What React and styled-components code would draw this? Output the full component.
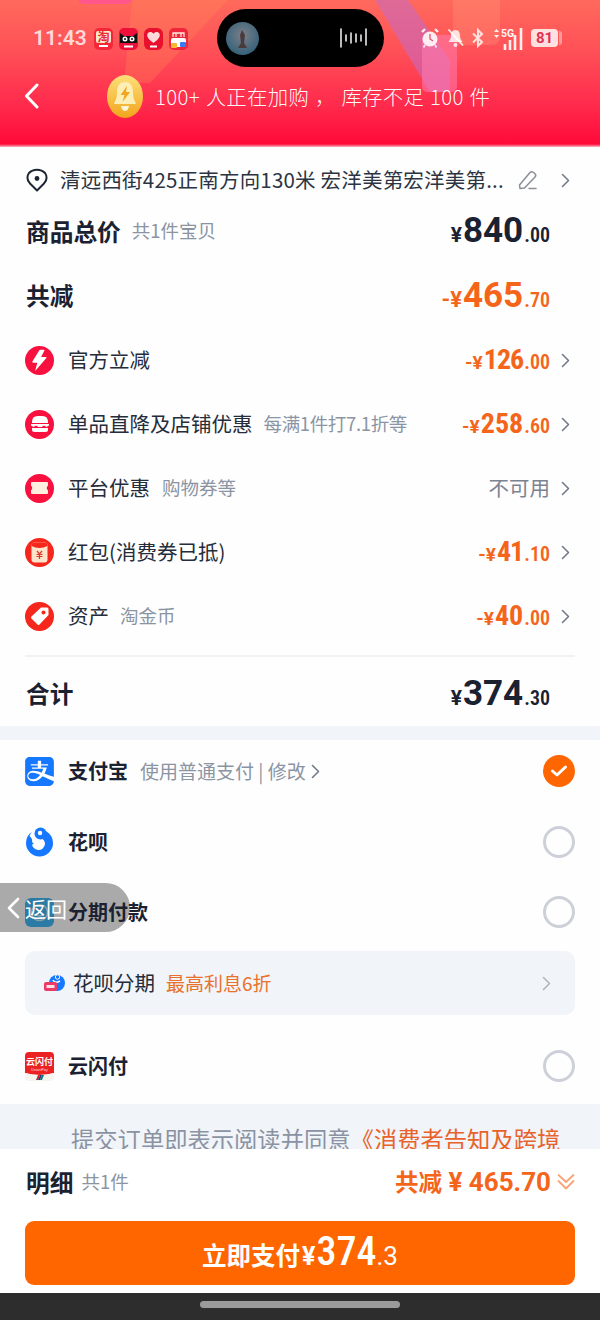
import React from "react";
import styled, { createGlobalStyle } from "styled-components";
import { SiAlipay } from "react-icons/si";

const GlobalStyle = createGlobalStyle`
  html, body { margin: 0; padding: 0; background: #fff; }
  * { box-sizing: border-box; }
`;

const CJK = `"Noto Sans CJK SC", "Noto Sans", sans-serif`;
const NUM = `Roboto, "Liberation Sans", sans-serif`;
const ORANGE = "#f4651a";
const INK = "#1a2130";

const Screen = styled.div`
  position: relative;
  width: 600px;
  height: 1320px;
  overflow: hidden;
  display: flex;
  flex-direction: column;
  background: #fefefe;
  font-family: ${CJK};
  color: ${INK};
`;

/* ---------- top banner ---------- */
const Banner = styled.header`
  position: relative;
  flex: 0 0 147px;
  overflow: hidden;
  background: linear-gradient(180deg, #ff6a5c 0%, #ff5057 35%, #ff2c4d 70%, #ff0a3a 98%, #ffb9c4 100%);
`;
const Decor = styled.svg`
  position: absolute;
  inset: 0;
  width: 600px;
  height: 147px;
`;
const StatusBar = styled.div`
  position: relative;
  display: flex;
  align-items: center;
  height: 58px;
  margin-top: 9px;
  padding-left: 33px;
`;
const Clock = styled.span`
  width: 61px;
  font: 600 21px ${NUM};
  color: rgba(255, 255, 255, 0.78);
`;
const Apps = styled.div`
  display: flex;
  gap: 6px;
  width: 96px;
  margin-top: 1px;
`;
const Island = styled.div`
  display: flex;
  align-items: center;
  justify-content: space-between;
  width: 167px;
  height: 58px;
  margin-left: 27px;
  padding: 0 16px 0 9px;
  border-radius: 29px;
  background: #000;
`;
const Tray = styled.div`
  display: flex;
  align-items: center;
  margin-left: 37px;
  gap: 8px;
`;
const Battery = styled.span`
  position: relative;
  display: block;
  width: 27px;
  height: 18px;
  border-radius: 4px;
  background: rgba(255, 255, 255, 0.82);
  color: #e2304f;
  font: 700 15px/18px ${NUM};
  text-align: center;
  &::after {
    content: "";
    position: absolute;
    right: -4px;
    top: 2px;
    width: 3px;
    height: 14px;
    border-radius: 0 3px 3px 0;
    background: rgba(255, 255, 255, 0.4);
  }
`;
const NavBar = styled.div`
  position: relative;
  display: flex;
  align-items: center;
  height: 58px;
  padding-left: 24px;
`;
const Notice = styled.span`
  margin-left: 12px;
  font-size: 20.4px;
  font-weight: 300;
  letter-spacing: 0.3px;
  word-spacing: 1px;
  color: rgba(255, 255, 255, 0.98);
  white-space: pre;
`;
const BellWrap = styled.span`
  display: flex;
  margin-left: 68px;
`;

/* ---------- order summary ---------- */
const Row = styled.div`
  display: flex;
  align-items: center;
  height: ${(p) => p.$h || 64}px;
  padding: 0 30px 0 25px;
  margin-top: ${(p) => p.$top || 0}px;
`;
const TotalRow = styled(Row)`
  padding: ${(p) => p.$pad || 0}px 50px 0 26px;
`;
const AddressText = styled.span`
  flex: 1;
  margin: 0 0 2px 11px;
  font-size: 20.5px;
  color: #2c3442;
  white-space: nowrap;
  letter-spacing: 0.2px;
`;
const Title = styled.span`
  font-size: 23.7px;
  font-weight: 700;
  color: ${INK};
`;
const Hint = styled.span`
  margin: 0 0 2px ${(p) => p.$gap || 11}px;
  font-size: ${(p) => p.$size || 18.5}px;
  letter-spacing: ${(p) => p.$track || 0}px;
  color: #8b94a3;
  white-space: nowrap;
`;
const Label = styled.span`
  margin: 0 0 2px 14px;
  font-size: 20.5px;
  color: #252c3a;
  white-space: nowrap;
`;
const Price = styled.span`
  margin: 0 0 ${(p) => p.$lift || 0}px auto;
  font-family: ${NUM};
  color: ${(p) => (p.$warm ? ORANGE : INK)};
  white-space: nowrap;
  line-height: 1;
  display: inline-flex;
  align-items: baseline;
`;
const Sign = styled.span`
  font-size: ${(p) => p.$size}px;
  font-weight: 700;
  margin-right: 1px;
`;
const Whole = styled.span`
  font-size: ${(p) => p.$size}px;
  font-weight: 700;
  font-stretch: ${(p) => p.$stretch}%;
  letter-spacing: ${(p) => p.$track || 0}px;
`;
const Cents = styled.span`
  font-size: ${(p) => p.$size}px;
  font-weight: 600;
  font-stretch: 84%;
  margin-left: 1px;
`;
const Muted = styled.span`
  margin: 0 0 2px auto;
  font-size: 20.5px;
  color: #7b8392;
`;
const Arrow = styled.svg`
  flex: none;
  width: 9px;
  height: 15px;
  margin-left: ${(p) => p.$gap ?? 11}px;
  fill: none;
  stroke: ${(p) => p.$tone || "#737b8a"};
  stroke-width: 1.6;
  stroke-linecap: round;
  stroke-linejoin: round;
`;
const Round = styled.span`
  flex: none;
  width: 29px;
  height: 29px;
  border-radius: 50%;
  background: ${(p) => p.$bg};
  display: flex;
  align-items: center;
  justify-content: center;
`;
const Divider = styled.div`
  height: 2px;
  margin: 7px 25px 0;
  background: #f1f2f4;
`;
const Gap = styled.div`
  flex: 0 0 14px;
  background: #f1f4f8;
`;

/* ---------- payment methods ---------- */
const PayRow = styled(Row)`
  padding: ${(p) => p.$pad || 0}px 25px 0 25px;
`;
const PayName = styled.span`
  position: relative;
  z-index: 2;
  margin: 0 0 2px 14px;
  font-size: 20px;
  font-weight: 700;
  color: ${INK};
  white-space: nowrap;
`;
const Radio = styled.span`
  flex: none;
  margin-left: auto;
  width: 32px;
  height: 32px;
  border-radius: 50%;
  border: 3px solid #cdd0d8;
`;
const Checked = styled.span`
  flex: none;
  margin-left: auto;
  width: 32px;
  height: 32px;
  border-radius: 50%;
  background: #ff6600;
  display: flex;
  align-items: center;
  justify-content: center;
`;
const InstalmentMark = styled.span`
  flex: none;
  width: 29px;
  height: 29px;
  border-radius: 6px;
  background: #00a0f5;
  display: flex;
  align-items: center;
  justify-content: center;
`;
const PlanCard = styled.div`
  display: flex;
  align-items: center;
  height: 64px;
  margin: 9px 25px 0;
  padding: 0 24px 0 19px;
  border-radius: 10px;
  background: #f1f4f8;
`;
const PlanName = styled.span`
  margin: 0 0 2px 8px;
  font-size: 20.5px;
  color: #252c3a;
`;
const PlanOffer = styled.span`
  margin: 0 0 2px 11px;
  font-size: 19px;
  color: #e8722c;
`;
const Terms = styled.div`
  flex: 0 0 45px;
  overflow: hidden;
  padding: 20px 0 0 71px;
  background: #f1f4f8;
  font-size: 23.3px;
  line-height: 30px;
  color: #8a93a3;
  white-space: nowrap;
`;
const TermsLink = styled.span`
  color: #e8622a;
`;

/* ---------- checkout footer ---------- */
const Footer = styled.footer`
  flex: 0 0 144px;
  background: #fff;
  padding: 0 25px;
  display: flex;
  flex-direction: column;
`;
const FooterTop = styled.div`
  display: flex;
  align-items: center;
  height: 66px;
  padding-left: 1px;
`;
const Saved = styled.span`
  margin: 0 0 2px auto;
  font-size: 23.5px;
  font-weight: 700;
  color: ${ORANGE};
  white-space: pre;
`;
const SavedNum = styled.span`
  font-family: ${NUM};
  font-size: 26px;
  font-weight: 700;
`;
const PayButton = styled.button`
  display: flex;
  align-items: baseline;
  justify-content: center;
  height: 64px;
  margin-top: 6px;
  padding: 11px 0 0;
  border: 0;
  border-radius: 9px;
  background: #ff6600;
  color: #fff;
  font-family: ${CJK};
  font-size: 24.5px;
  font-weight: 700;
  line-height: 40px;
`;
const ButtonWhole = styled.span`
  font-family: ${NUM};
  font-size: 40px;
  font-weight: 500;
  font-stretch: 78%;
  margin-left: 1px;
`;
const ButtonCents = styled.span`
  font-family: ${NUM};
  font-size: 26px;
  font-weight: 400;
`;
const ButtonYen = styled.span`
  font-family: ${NUM};
  font-size: 25px;
  font-weight: 700;
  margin-left: 2px;
`;
const HomeBar = styled.div`
  flex: 0 0 27px;
  display: flex;
  justify-content: center;
  padding-top: 8px;
  background: #2d2d2d;
`;
const HomePill = styled.span`
  width: 200px;
  height: 7px;
  border-radius: 4px;
  background: #9a9a9a;
`;

/* Swipe-back hint that floats over the list */
const BackHint = styled.div`
  position: absolute;
  left: 0;
  top: 883px;
  width: 130px;
  height: 49px;
  display: flex;
  align-items: center;
  padding-left: 7px;
  border-radius: 0 25px 25px 0;
  background: rgba(85, 85, 85, 0.5);
  color: #fff;
  font-size: 21px;
  gap: 5px;
`;

const Chevron = ({ tone, gap }) => (
  <Arrow viewBox="0 0 9 15" $tone={tone} $gap={gap}>
    <path d="M1.5 1.5 L7.5 7.5 L1.5 13.5" />
  </Arrow>
);

const Amount = ({ warm, sign, whole, cents, lift = 1, track = 0, s = 19, w = 28, c = 20, stretch = 85 }) => (
  <Price $warm={warm} $lift={lift}>
    <Sign $size={s}>{sign}</Sign>
    <Whole $size={w} $track={track} $stretch={stretch}>{whole}</Whole>
    <Cents $size={c}>{cents}</Cents>
  </Price>
);

const TaoIcon = () => (
  <svg width="19" height="22" viewBox="0 0 19 22">
    <rect width="19" height="22" rx="5" fill="#f2273a" />
    <rect x="2" y="3" width="15" height="12" rx="2" fill="#ffe9c9" />
    <text x="9.5" y="13.5" fontSize="12" fontWeight="700" textAnchor="middle" fill="#e8262f" fontFamily={CJK}>淘</text>
    <rect x="5" y="17" width="9" height="2" fill="#fff" />
  </svg>
);
const CatIcon = () => (
  <svg width="19" height="22" viewBox="0 0 19 22">
    <rect width="19" height="22" rx="5" fill="#ee0f3a" />
    <path d="M1 5 L5 8 H14 L18 5 V15 H1 Z" fill="#111" />
    <circle cx="6" cy="11" r="2.5" fill="#fff" />
    <circle cx="13" cy="11" r="2.5" fill="#fff" />
    <circle cx="6" cy="11" r="1" fill="#111" />
    <circle cx="13" cy="11" r="1" fill="#111" />
    <rect x="5" y="17.5" width="9" height="2" fill="#fff" />
  </svg>
);
const HeartIcon = () => (
  <svg width="19" height="22" viewBox="0 0 19 22">
    <rect width="19" height="22" rx="6" fill="#e8102c" />
    <path d="M9.5 15 C4 11 2.5 8.5 3.5 5.8 C4.6 3.3 8 3.3 9.5 5.8 C11 3.3 14.4 3.3 15.5 5.8 C16.5 8.5 15 11 9.5 15 Z" fill="#ffd9d9" />
    <rect x="6" y="17.5" width="7" height="2" fill="#fff" />
  </svg>
);
const StoreIcon = () => (
  <svg width="19" height="22" viewBox="0 0 19 22">
    <rect width="19" height="22" rx="5" fill="#f0263c" />
    <path d="M4 9 V5 H15 V9 M7 5 V9 M12 5 V9" stroke="#ffe9d9" strokeWidth="1.3" fill="none" />
    <rect x="2" y="10" width="15" height="9" rx="2" fill="#fff" />
    <rect x="2" y="15" width="6" height="5" rx="1" fill="#f7b733" />
    <rect x="11" y="14" width="6" height="5" rx="1" fill="#3a7df0" />
  </svg>
);

const Ring = { fill: "none", stroke: "rgba(255,255,255,.8)" };

export default function App() {
  return (
    <Screen>
      <GlobalStyle />
      <Banner>
        <Decor viewBox="0 0 600 147">
          <rect x="78" y="-20" width="54" height="24" rx="6" fill="#ff4fa0" opacity=".7" />
          <path d="M132 0 H228 L150 83 H134 Q125 83 125 74 Z" fill="#ff8a55" opacity=".3" />
          <path d="M375 0 H408 L450 60 V92 H430 Z" fill="#c86bc0" opacity=".6" />
          <rect x="422" y="35" width="35" height="57" rx="5" fill="#ff7cb0" opacity=".55" />
          <path d="M453 0 H500 V36 Q500 45 491 45 H462 Q453 45 453 36 Z" fill="#ff9a7c" opacity=".3" />
        </Decor>
        <StatusBar>
          <Clock>11:43</Clock>
          <Apps>
            <TaoIcon />
            <CatIcon />
            <HeartIcon />
            <StoreIcon />
          </Apps>
          <Island>
            <svg width="33" height="33" viewBox="0 0 33 33">
              <defs>
                <radialGradient id="cover" cx="50%" cy="40%" r="65%">
                  <stop offset="0%" stopColor="#7d7f88" />
                  <stop offset="100%" stopColor="#2e5f78" />
                </radialGradient>
              </defs>
              <circle cx="16.5" cy="16.5" r="16.5" fill="url(#cover)" />
              <path d="M16 8 L19 13 L18 21 L21 26 H12 L15 21 L14 13 Z" fill="#4a3a3c" />
            </svg>
            <svg width="28" height="20" viewBox="0 0 28 20" stroke="#e9e9e9" strokeWidth="1.6" strokeLinecap="round">
              <path d="M1 1 V19 M6 7 V13 M11 5 V15 M16 6 V14 M21 7 V13 M26 1 V17" />
            </svg>
          </Island>
          <Tray>
            <svg width="18" height="20" viewBox="0 0 18 20">
              <circle cx="9" cy="11" r="7.5" fill="rgba(255,255,255,.88)" />
              <path d="M9 6 V11 L12 13" stroke="#e8506a" strokeWidth="1.3" fill="none" />
              <path d="M1 4 L4 1 M17 4 L14 1" stroke="rgba(255,255,255,.88)" strokeWidth="2.4" />
              <path d="M4 17 L2.5 19.5 M14 17 L15.5 19.5" stroke="rgba(255,255,255,.88)" strokeWidth="1.6" />
            </svg>
            <svg width="17" height="20" viewBox="0 0 17 20">
              <path d="M8.5 2 C5 2 4 5 4 8 C4 11 2.5 12.5 1.5 14 H15.5 C14.5 12.5 13 11 13 8 C13 5 12 2 8.5 2 Z" fill="rgba(255,255,255,.8)" />
              <circle cx="8.5" cy="17" r="2" fill="rgba(255,255,255,.8)" />
              <path d="M1.5 1.5 L16 17.5" stroke="rgba(255,255,255,.9)" strokeWidth="1.8" />
            </svg>
            <svg width="12" height="20" viewBox="0 0 12 20" {...Ring} strokeWidth="2">
              <path d="M1 5.5 L10 14 L6 18 V2 L10 6 L1 14.5" />
            </svg>
            <svg width="29" height="24" viewBox="0 0 29 24" style={{ marginLeft: 2, marginTop: 2 }}>
              <path d="M0 5 L2.5 2 L5 5 Z M0 8 L2.5 11 L5 8 Z" fill="rgba(255,255,255,.9)" />
              <text x="7" y="10" fontSize="10.5" fontWeight="700" fontFamily={NUM} fill="rgba(255,255,255,.95)">5G</text>
              <path d="M11 23 V17 M16 23 V13 M21 23 V8 M27 23 V1" stroke="rgba(255,255,255,.9)" strokeWidth="2.6" />
            </svg>
            <Battery>81</Battery>
          </Tray>
        </StatusBar>
        <NavBar>
          <svg width="15" height="26" viewBox="0 0 15 26" fill="none" stroke="#fff" strokeWidth="3" strokeLinecap="round" strokeLinejoin="round">
            <path d="M13 2 L2.5 13 L13 24" />
          </svg>
          <BellWrap>
            <svg width="36" height="43" viewBox="0 0 36 43">
              <defs>
                <linearGradient id="bellFill" x1="0" y1="0" x2="0" y2="1">
                  <stop offset="0%" stopColor="#fde07a" />
                  <stop offset="100%" stopColor="#f2a51c" />
                </linearGradient>
              </defs>
              <ellipse cx="18" cy="21.5" rx="18" ry="21.5" fill="url(#bellFill)" />
              <path d="M18 7 C11 7 10 13 10 18 C10 24 8 26 7 29 H29 C28 26 26 24 26 18 C26 13 25 7 18 7 Z" fill="#fdeeb5" />
              <path d="M20 11 L13.5 20 H17.5 L15.5 27 L23 17 H19 Z" fill="#f2a51c" />
              <path d="M14 31 H22 Q21 36 18 36 Q15 36 14 31 Z" fill="#fff5d8" />
            </svg>
          </BellWrap>
          <Notice>100+ 人正在加购 ， 库存不足 100 件</Notice>
        </NavBar>
      </Banner>

      <Row $h={66}>
        <svg width="24" height="24" viewBox="0 0 24 24" fill="none" stroke="#1e2532" strokeWidth="2" strokeLinejoin="round">
          <path d="M12 22.5 L5 15.5 C1.5 12 2 7.5 4 5 C8 0.5 16 0.5 20 5 C22 7.5 22.5 12 19 15.5 Z" />
          <circle cx="12" cy="10.5" r="2.4" fill="#1e2532" stroke="none" />
        </svg>
        <AddressText>清远西街425正南方向130米 宏洋美第宏洋美第...</AddressText>
        <svg width="20" height="20" viewBox="0 0 20 20" fill="none" stroke="#8b8f98" strokeWidth="1.5" strokeLinejoin="round" strokeLinecap="round">
          <path d="M1.5 15 L12 2.5 Q13.5 1 15.5 2.5 L17 3.8 Q18.5 5.5 17 7 L6.5 18 L2 18.5 Z" />
          <path d="M11 18.5 H18" />
        </svg>
        <Chevron gap={23} />
      </Row>
      <TotalRow $h={35}>
        <Title>商品总价</Title>
        <Hint>共1件宝贝</Hint>
        <Amount sign="¥" whole="840" cents=".00" s={21} w={35} lift={0} stretch={94} />
      </TotalRow>
      <TotalRow $h={66} $top={14}>
        <Title>共减</Title>
        <Amount warm sign="-¥" whole="465" cents=".70" s={22} w={35} lift={0} stretch={94} />
      </TotalRow>

      <Row>
        <Round $bg="#f8103e">
          <svg width="21" height="23" viewBox="0 0 19 21">
            <path d="M9.5 1 L3 11.5 Q2.6 12.6 3.8 12.6 H7.5 L5.5 20 L15.8 8.3 Q16.3 7.4 15.2 7.4 H11 L14 1.4 Q14.2 0.6 13.2 0.6 H10.5 Q9.9 0.6 9.5 1 Z" fill="#fff" />
          </svg>
        </Round>
        <Label>官方立减</Label>
        <Amount warm sign="-¥" whole="126" cents=".00" track={-1} />
        <Chevron />
      </Row>
      <Row>
        <Round $bg="#f8103e">
          <svg width="20" height="18" viewBox="0 0 20 18" fill="#fff">
            <path d="M2 7 Q2 1 7.5 1 H12.5 Q18 1 18 7 V8 H2 Z" />
            <path d="M1 9 H19 V10.5 L16.5 12 L14 10.5 L11.5 12 H8.5 L6 10.5 L3.5 12 L1 10.5 Z" />
            <path d="M2 13 H18 V14.5 Q18 17 15.5 17 H4.5 Q2 17 2 14.5 Z" />
          </svg>
        </Round>
        <Label>单品直降及店铺优惠</Label>
        <Hint $track={-0.35}>每满1件打7.1折等</Hint>
        <Amount warm sign="-¥" whole="258" cents=".60" />
        <Chevron />
      </Row>
      <Row>
        <Round $bg="#f8103e">
          <svg width="19" height="14" viewBox="0 0 19 14">
            <path d="M2 1 H17 Q18 1 18 2 V4.5 Q15.5 7 18 9.5 V12 Q18 13 17 13 H2 Q1 13 1 12 V9.5 Q3.5 7 1 4.5 V2 Q1 1 2 1 Z" fill="#fdeee0" />
          </svg>
        </Round>
        <Label>平台优惠</Label>
        <Hint $gap={12}>购物券等</Hint>
        <Muted>不可用</Muted>
        <Chevron />
      </Row>
      <Row>
        <Round $bg="#f5261c">
          <svg width="17" height="21" viewBox="0 0 17 21">
            <rect x="0.5" y="0.5" width="16" height="20" rx="3" fill="#fde3c9" />
            <path d="M0.5 4 Q8.5 8 16.5 4 V3.5 Q16.5 0.5 13.5 0.5 H3.5 Q0.5 0.5 0.5 3.5 Z" fill="#f5261c" />
            <path d="M6 9 L8.5 12 L11 9 M5.5 12.5 H11.5 M5.5 14.5 H11.5 M8.5 12 V17" stroke="#d83a2a" strokeWidth="1.2" fill="none" />
          </svg>
        </Round>
        <Label>红包(消费券已抵)</Label>
        <Amount warm sign="-¥" whole="41" cents=".10" track={-1} />
        <Chevron />
      </Row>
      <Row>
        <Round $bg="#f5261c">
          <svg width="20" height="20" viewBox="0 0 20 20">
            <path d="M11 1.5 H17 Q18.5 1.5 18.5 3 V9 L9.5 18.5 Q8.5 19.5 7.5 18.5 L1.5 12.5 Q0.5 11.5 1.5 10.5 Z" fill="#fff" />
            <circle cx="13.5" cy="6.5" r="2" fill="#f5261c" />
          </svg>
        </Round>
        <Label>资产</Label>
        <Hint $gap={11}>淘金币</Hint>
        <Amount warm sign="-¥" whole="40" cents=".00" />
        <Chevron />
      </Row>
      <Divider />
      <TotalRow $h={69} $pad={3}>
        <Title>合计</Title>
        <Amount sign="¥" whole="374" cents=".30" s={21} w={35} lift={0} stretch={88} />
      </TotalRow>
      <Gap />

      <PayRow $h={62}>
        <SiAlipay size={29} color="#1677ff" style={{ flex: "none" }} />
        <PayName>支付宝</PayName>
        <Hint $gap={12} $size={19}>使用普通支付 | 修改</Hint>
        <Chevron gap={5} />
        <Checked>
          <svg width="18" height="14" viewBox="0 0 18 14" fill="none" stroke="#fff" strokeWidth="3" strokeLinecap="round" strokeLinejoin="round">
            <path d="M2.5 7 L7 11 L15.5 3" />
          </svg>
        </Checked>
      </PayRow>
      <PayRow $h={80}>
        <svg width="29" height="30" viewBox="0 0 29 30" style={{ flex: "none" }}>
          <circle cx="14.5" cy="16" r="13.5" fill="#1677ff" />
          <path d="M8 2 L4.5 9 Q8 12 7 16 A6.5 6.5 0 0 0 20 17 Q20 13 16 11 L10 1 Z" fill="#fff" />
          <circle cx="7.5" cy="16.5" r="1" fill="#1677ff" />
          <circle cx="15.5" cy="6.5" r="6" fill="#1677ff" />
          <circle cx="15" cy="6" r="2.2" fill="#fff" />
        </svg>
        <PayName>花呗</PayName>
        <Radio />
      </PayRow>
      <PayRow $h={60}>
        <InstalmentMark>
          <svg width="21" height="21" viewBox="0 0 21 21" fill="none" stroke="rgba(255,255,255,.75)" strokeWidth="1.5">
            <circle cx="10.5" cy="10.5" r="8" />
            <path d="M6 12 Q10.5 16 15 12" />
          </svg>
        </InstalmentMark>
        <PayName>分期付款</PayName>
        <Radio />
      </PayRow>
      <PlanCard>
        <svg width="21" height="20" viewBox="0 0 21 20" style={{ flex: "none" }}>
          <circle cx="13" cy="10" r="8" fill="#1677ff" />
          <circle cx="13.5" cy="4" r="2.2" fill="#1677ff" stroke="#f1f4f8" />
          <path d="M9 7 Q11 11 16 8" stroke="#fff" strokeWidth="1.6" fill="none" />
          <rect x="0" y="9" width="13" height="9" rx="2" fill="#ec3a66" />
          <rect x="2.5" y="12" width="8" height="3" fill="#fff" opacity=".85" />
        </svg>
        <PlanName>花呗分期</PlanName>
        <PlanOffer>最高利息6折</PlanOffer>
        <Arrow viewBox="0 0 9 15" $tone="#b0b5bf" style={{ marginLeft: "auto" }}>
          <path d="M1.5 1.5 L7.5 7.5 L1.5 13.5" />
        </Arrow>
      </PlanCard>
      <PayRow $h={89} $pad={13}>
        <svg width="29" height="29" viewBox="0 0 29 29" style={{ flex: "none" }}>
          <path d="M4 0 H25 Q29 0 29 4 V21 Q14.5 25 0 21 V4 Q0 0 4 0 Z" fill="#ec2222" />
          <path d="M0 21 Q14.5 25 29 21 V25 Q29 29 25 29 H4 Q0 29 0 25 Z" fill="#f5f5f0" />
          <text x="14.5" y="13" fontSize="9" fontWeight="700" textAnchor="middle" fill="#fff" fontFamily={CJK}>云闪付</text>
          <text x="14.5" y="19" fontSize="4" textAnchor="middle" fill="#ffd9d9" fontFamily={NUM}>UnionPay</text>
          <path d="M11 28 L13 23 H15 L13 28 Z" fill="#d02030" />
          <path d="M13 28 L15 23 H17 L15 28 Z" fill="#1a3f80" />
          <path d="M15 28 L17 23 H19 L17 28 Z" fill="#0e7a70" />
        </svg>
        <PayName>云闪付</PayName>
        <Radio />
      </PayRow>
      <Terms>
        提交订单即表示阅读并同意<TermsLink>《消费者告知及跨境</TermsLink>
      </Terms>

      <Footer>
        <FooterTop>
          <Title>明细</Title>
          <Hint $gap={8}>共1件</Hint>
          <Saved>
            共减<SavedNum> ¥ 465.70</SavedNum>
          </Saved>
          <svg width="18" height="18" viewBox="0 0 18 18" fill="none" stroke="#f9a474" strokeWidth="1.8" strokeLinecap="round" strokeLinejoin="round" style={{ marginLeft: 6 }}>
            <path d="M1.5 2 L9 9 L16.5 2 M1.5 8 L9 15.5 L16.5 8" />
          </svg>
        </FooterTop>
        <PayButton>
          立即支付<ButtonYen>¥</ButtonYen>
          <ButtonWhole>374</ButtonWhole>
          <ButtonCents>.3</ButtonCents>
        </PayButton>
      </Footer>
      <HomeBar>
        <HomePill />
      </HomeBar>

      <BackHint>
        <svg width="13" height="22" viewBox="0 0 13 22" fill="none" stroke="#fff" strokeWidth="2.6" strokeLinecap="round" strokeLinejoin="round">
          <path d="M11 2 L2 11 L11 20" />
        </svg>
        <span>返回</span>
      </BackHint>
    </Screen>
  );
}
